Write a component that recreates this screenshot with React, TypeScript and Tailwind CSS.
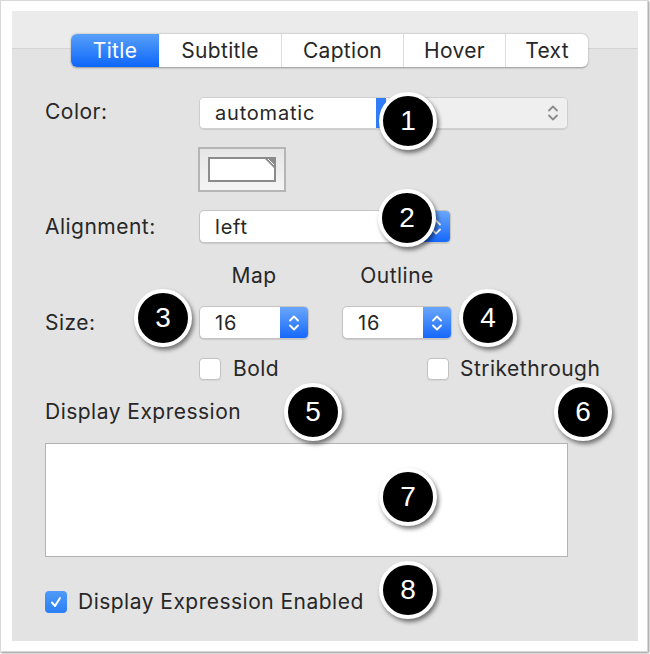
import React from 'react';

const tabs = [
  { label: 'Title', w: 88, active: true },
  { label: 'Subtitle', w: 122 },
  { label: 'Caption', w: 122 },
  { label: 'Hover', w: 102 },
  { label: 'Text', w: 83 },
];

function Chevrons({ color }: { color: string }) {
  return (
    <svg width="12" height="20" viewBox="0 0 12 20" fill="none" stroke={color} strokeWidth="1.8" strokeLinecap="round" strokeLinejoin="round">
      <path d="M2 7.5 L6 3.5 L10 7.5" />
      <path d="M2 12.5 L6 16.5 L10 12.5" />
    </svg>
  );
}

function Popup({ value, width }: { value: string; width: number }) {
  return (
    <div
      className="flex h-[33px] rounded-[5px] border border-[#c4c4c4] bg-white shadow-[0_1px_1px_rgba(0,0,0,0.12)] overflow-hidden"
      style={{ width }}
    >
      <div className="flex-1 flex items-center pl-[15px] text-[20px] tracking-[0.04em]">{value}</div>
      <div className="w-[28px] flex items-center justify-center bg-[linear-gradient(#6aa7fa,#1668fb)]">
        <Chevrons color="#ffffff" />
      </div>
    </div>
  );
}

function Checkbox({ checked }: { checked?: boolean }) {
  if (checked) {
    return (
      <div className="w-[22px] h-[22px] rounded-[4px] bg-[linear-gradient(#4f9af8,#2b7ff6)] flex items-center justify-center">
        <svg width="14" height="14" viewBox="0 0 14 14" fill="none" stroke="#fff" strokeWidth="2" strokeLinecap="round" strokeLinejoin="round">
          <path d="M3 7.5 L6 11 L11 3" />
        </svg>
      </div>
    );
  }
  return <div className="w-[22px] h-[22px] rounded-[4px] bg-white border border-[#c2c2c2] shadow-[0_1px_1px_rgba(0,0,0,0.06)]" />;
}

function Badge({ n, x, y }: { n: number; x: number; y: number }) {
  return (
    <div
      className="absolute w-[58px] h-[58px] rounded-full bg-black border-[4px] border-white shadow-[2px_3px_4px_rgba(0,0,0,0.5)] flex items-center justify-center text-white text-[28px] tracking-normal font-['Liberation_Sans',sans-serif] leading-none"
      style={{ left: x - 29, top: y - 29 }}
    >
      {n}
    </div>
  );
}

export default function App() {
  return (
    <div className="relative w-[650px] h-[654px] bg-white font-['Inter',sans-serif] text-[#272727] tracking-[0.03em]">
      <div className="w-[648px] h-[652px] border border-[#d8d8d8] shadow-[1px_1px_2px_rgba(0,0,0,0.45)] pl-[11px] pt-[10px]">
        <div className="w-[626px] h-[630px] bg-[linear-gradient(#ebebeb_0px,#ebebeb_37px,#d4d4d4_37px,#d4d4d4_38px,#e3e3e3_38px)] pl-[33px] pt-[23px]">
          {/* segmented tabs */}
          <div className="ml-[26px] flex h-[33px] w-fit rounded-[6px] bg-white shadow-[0_0.5px_2px_rgba(0,0,0,0.35)] overflow-hidden tracking-[0.02em]">
            {tabs.map((t, i) => (
              <div
                key={t.label}
                className={
                  t.active
                    ? 'flex items-center justify-center pt-[1px] text-[21px] text-white bg-[linear-gradient(#58a0f9,#0d66fb)]'
                    : 'flex items-center justify-center pt-[1px] text-[21px] text-[#272727] border-l border-[#dcdcdc]' + (i === 1 ? ' border-l-0' : '')
                }
                style={{ width: t.w }}
              >
                {t.label}
              </div>
            ))}
          </div>

          {/* color */}
          <div className="mt-[30px] flex items-center h-[32px]">
            <div className="w-[154px] text-[21px] -mt-[3px]">Color:</div>
            <div className="flex w-[369px] h-[32px] rounded-[5px] border border-[#cfcfcf] overflow-hidden shadow-[0_1px_1px_rgba(0,0,0,0.1)]">
              <div className="w-[176px] bg-white flex items-center pl-[15px] text-[20px] tracking-[0.04em]">automatic</div>
              <div className="w-[10px] bg-[#2f7df8]" />
              <div className="flex-1 bg-[#efefef] flex items-center justify-end pr-[8px]">
                <Chevrons color="#8c8c8c" />
              </div>
            </div>
          </div>

          <div className="mt-[18px] ml-[153px] w-[88px] h-[45px] border-2 border-[#b5b5b5] bg-[linear-gradient(#e6e6e6,#f4f4f4)] flex items-center justify-center">
            <div className="relative w-[68px] h-[25px] border-2 border-[#8b8b8b] bg-white overflow-hidden">
              <svg className="absolute right-0 top-0" width="9" height="9" viewBox="0 0 9 9">
                <path d="M0 0 L9 0 L9 9 Z" fill="#8b8b8b" />
                <path d="M3 0 L9 6" stroke="#fff" strokeWidth="1" />
              </svg>
            </div>
          </div>

          {/* alignment */}
          <div className="mt-[18px] flex items-center h-[33px]">
            <div className="w-[154px] text-[21px]">Alignment:</div>
            <Popup value="left" width={252} />
          </div>

          {/* size */}
          <div className="mt-[17px] ml-[154px] flex gap-[33px] h-[24px] text-[21px]">
            <div className="w-[110px] text-center">Map</div>
            <div className="w-[110px] text-center">Outline</div>
          </div>
          <div className="mt-[22px] flex items-center h-[33px]">
            <div className="w-[154px] text-[21px]">Size:</div>
            <div className="flex gap-[33px]">
              <Popup value="16" width={110} />
              <Popup value="16" width={110} />
            </div>
          </div>

          <div className="mt-[18px] ml-[154px] flex items-center h-[23px] text-[21px]">
            <Checkbox />
            <span className="ml-[12px] w-[194px]">Bold</span>
            <Checkbox />
            <span className="ml-[11px]">Strikethrough</span>
          </div>

          {/* expression */}
          <div className="mt-[16px] h-[24px] text-[21px]">Display Expression</div>
          <div className="mt-[23px] w-[523px] h-[114px] bg-white border border-[#b3b3b3]" />

          <div className="mt-[33px] flex items-center h-[23px] text-[21px]">
            <Checkbox checked />
            <span className="ml-[11px]">Display Expression Enabled</span>
          </div>
        </div>
      </div>

      <Badge n={1} x={408} y={121} />
      <Badge n={2} x={407} y={218} />
      <Badge n={3} x={163} y={318} />
      <Badge n={4} x={488} y={318} />
      <Badge n={5} x={313} y={412} />
      <Badge n={6} x={583} y={412} />
      <Badge n={7} x={408} y={497} />
      <Badge n={8} x={408} y={590} />
    </div>
  );
}
